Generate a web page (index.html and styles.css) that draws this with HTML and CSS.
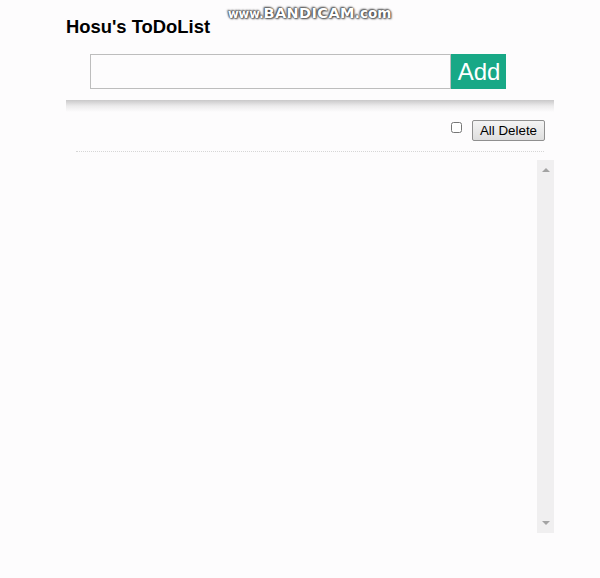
FILE: index.html
```html
<!DOCTYPE html>
<html>
<head>
<meta charset="utf-8">
<link rel="stylesheet" href="styles.css">
</head>
<body>
<div class="page">
  <h3 class="title">Hosu's ToDoList</h3>
  <div class="entry">
    <input class="entry-input" type="text">
    <button class="entry-add">Add</button>
  </div>
  <div class="shade"></div>
  <div class="toolbar">
    <input class="toolbar-check" type="checkbox">
    <button class="toolbar-delete">All Delete</button>
  </div>
  <div class="divider"></div>
  <div class="list">
    <ul class="list-items"></ul>
    <div class="scrollbar">
      <span class="arrow arrow-up"></span>
      <span class="arrow arrow-down"></span>
    </div>
  </div>
</div>
<div class="watermark"><span class="wm-small">www.</span><span class="wm-big">BANDICAM</span><span class="wm-com">.com</span></div>
</body>
</html>
```
FILE: styles.css
```css
html, body {
  margin: 0;
  padding: 0;
  background: #fdfcfd;
  font-family: "Liberation Sans", Arial, sans-serif;
}
.page {
  width: 488px;
  margin-left: 66px;
  display: flex;
  flex-direction: column;
}
.title {
  margin: 16px 0 0 0;
  font-size: 18.4px;
  line-height: 21px;
  font-weight: bold;
  color: #000;
}
.entry {
  display: flex;
  margin: 17px 0 0 24px;
  height: 35px;
}
.entry-input {
  box-sizing: border-box;
  width: 361px;
  height: 35px;
  margin: 0;
  border: 1px solid #bdbdbd;
  background: #fdfcfd;
  outline: none;
}
.entry-add {
  box-sizing: border-box;
  width: 55px;
  height: 35px;
  margin: 0;
  padding: 0 0 0 1px;
  border: none;
  background: #18a886;
  color: #fff;
  font-family: "Liberation Sans", Arial, sans-serif;
  font-size: 24px;
  line-height: 35px;
}
.shade {
  margin-top: 11px;
  height: 12px;
  background: linear-gradient(#c9c8c9, #ecebec 50%, #fdfcfd);
}
.toolbar {
  display: flex;
  justify-content: flex-end;
  align-items: flex-start;
  height: 29px;
  padding: 10px 9px 0 0;
}
.toolbar-check {
  width: 11px;
  height: 11px;
  margin: 0 10px 0 0;
  accent-color: #888;
}
.toolbar-delete {
  box-sizing: border-box;
  height: 21px;
  width: 73px;
  margin-top: -2px;
  padding: 0;
  font-family: "Liberation Sans", Arial, sans-serif;
  font-size: 13.33px;
  color: #000;
  background: linear-gradient(#f4f4f4, #dedede);
  border: 1px solid #8f8f8f;
  border-radius: 2px;
}
.divider {
  margin: 0 10px 0 10px;
  border-top: 1px dotted #d6d6d6;
}
.list {
  display: flex;
  margin: 8px 0 0 10px;
  height: 373px;
}
.list-items {
  flex: 1;
  margin: 0;
  padding: 0;
  list-style: none;
}
.scrollbar {
  width: 17px;
  background: #f0eff0;
  display: flex;
  flex-direction: column;
  justify-content: space-between;
  align-items: center;
  padding: 8px 0 8px;
  box-sizing: border-box;
}
.arrow {
  width: 0;
  height: 0;
  border-left: 4px solid transparent;
  border-right: 4px solid transparent;
}
.arrow-up {
  border-bottom: 4px solid #a3a3a3;
}
.arrow-down {
  border-top: 4px solid #a3a3a3;
}
.watermark {
  position: absolute;
  left: 228px;
  top: 2px;
  font-family: "DejaVu Sans", Verdana, sans-serif;
  font-weight: bold;
  line-height: 22px;
  color: #fff;
  white-space: nowrap;
  text-shadow: 0 0 1px #444, 0 0 2px #444, 1px 1px 2px #555, -1px -1px 2px #555;
}
.wm-small {
  font-size: 11.5px;
}
.wm-big {
  font-size: 14.5px;
  letter-spacing: 0.4px;
}
.wm-com {
  font-size: 13.5px;
}
```
